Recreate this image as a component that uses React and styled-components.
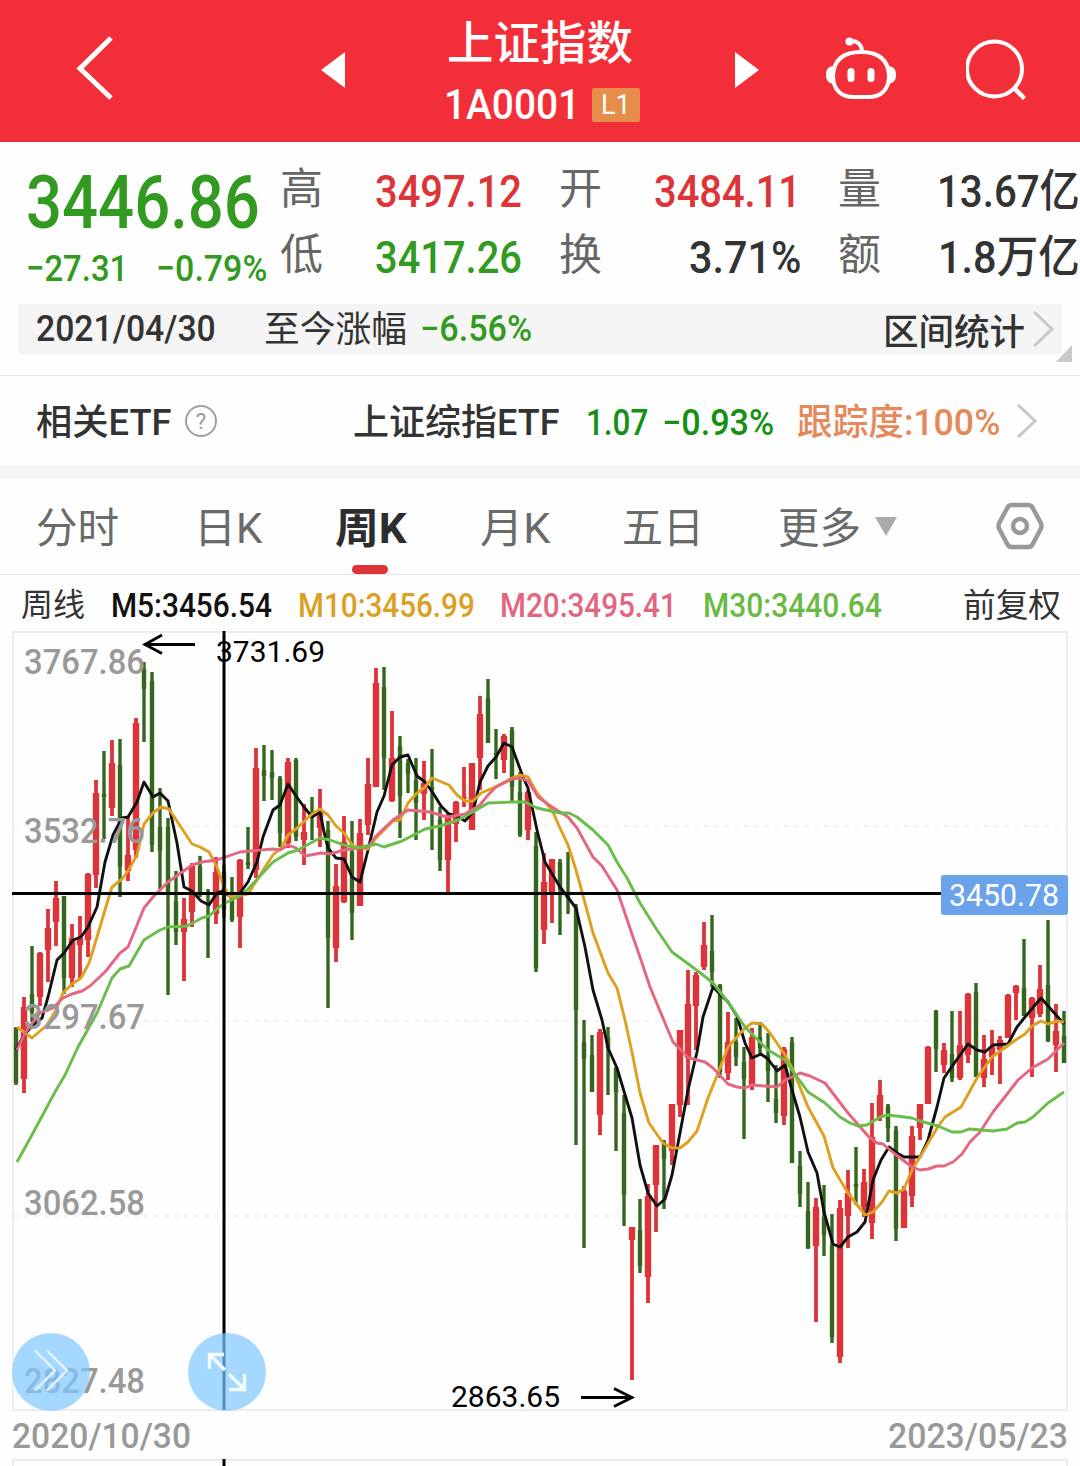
import React, { useLayoutEffect, useRef, useState } from 'react';
import styled, { createGlobalStyle, css } from 'styled-components';

const RED = '#dc3437';
const GREEN = '#329a20';
const CANDLE_GREEN = '#34661c';
const FONT = "Roboto, 'Noto Sans CJK SC', sans-serif";

const GlobalStyle = createGlobalStyle`
  * {
    box-sizing: border-box;
  }
  body {
    margin: 0;
    background: #fefefe;
    font-family: ${FONT};
    color: #333;
  }
  svg {
    display: block;
  }
`;

const Page = styled.div`
  width: 1080px;
  height: 1466px;
  overflow: hidden;
`;

const FitBox = styled.div`
  width: ${props => props.$width}px;
  height: ${props => props.$size}px;
  line-height: ${props => props.$size}px;
  font-size: ${props => props.$size}px;
  font-weight: ${props => props.$weight || 500};
  color: ${props => props.$color || 'inherit'};
  white-space: nowrap;
  flex: none;
  ${props =>
    props.$shift &&
    css`
      margin-top: ${props.$shift}px;
    `};
`;

const FitInner = styled.span`
  display: inline-block;
  transform-origin: 0 50%;
`;

// Squeezes its text into a fixed width, the way a condensed face would look
function Fit({ width, size, weight, color, shift, children }) {
  const inner = useRef(null);
  const [scale, setScale] = useState(1);
  useLayoutEffect(() => {
    setScale(width / inner.current.offsetWidth);
  }, [width, children]);
  return (
    <FitBox $width={width} $size={size} $weight={weight} $color={color} $shift={shift}>
      <FitInner ref={inner} style={{ transform: `scaleX(${scale})` }}>
        {children}
      </FitInner>
    </FitBox>
  );
}

const Header = styled.header`
  display: grid;
  grid-template-columns: 245px 124px 194px 187px 140px 1fr;
  align-items: center;
  height: 142px;
  padding: 0 0 2px 76px;
  background: #f22f38;
  color: #fff;
`;

const BackIcon = styled.svg`
  margin-bottom: 5px;
`;

const RobotIcon = styled.svg`
  margin-bottom: 4px;
`;

const Title = styled.div`
  display: flex;
  flex-direction: column;
  align-items: center;
  gap: 18px;
  padding-top: 6px;
  margin-right: 4px;
`;

const Code = styled.div`
  display: flex;
  align-items: center;
  gap: 12px;
  width: 196px;
  margin-left: 3px;
`;

const Level = styled.div`
  display: flex;
  align-items: center;
  justify-content: center;
  width: 48px;
  height: 34px;
  border-radius: 2px;
  background: #e78d4b;
`;

const NextCell = styled.div`
  padding-left: 96px;
`;

const Quote = styled.section`
  display: grid;
  grid-template-columns: 217px repeat(3, 242px);
  column-gap: 37px;
  height: 162px;
  padding: 16px 0 0 26px;
`;

const Price = styled.div`
  padding-top: 8px;
`;

const Change = styled.div`
  display: flex;
  gap: 28px;
  margin-top: 10px;
`;

const Pair = styled.div`
  display: flex;
  align-items: center;
  justify-content: space-between;
  height: 66px;
`;

const RangeBar = styled.section`
  position: relative;
  display: flex;
  align-items: center;
  width: 1044px;
  height: 50px;
  margin: 0 0 21px 18px;
  padding-left: 18px;
  background: #f5f5f5;
`;

const Spacer = styled.div`
  width: ${props => props.$w}px;
  flex: none;
`;

const Corner = styled.svg`
  position: absolute;
  right: -10px;
  bottom: -8px;
`;

const EtfRow = styled.section`
  display: flex;
  align-items: center;
  height: 103px;
  padding-left: 36px;
  border-top: 1px solid #e4e4e4;
  border-bottom: 12px solid #f5f5f5;
`;

const Help = styled.div`
  display: flex;
  align-items: center;
  justify-content: center;
  width: 32px;
  height: 32px;
  margin-left: 14px;
  border: 2px solid #a0a0a0;
  border-radius: 50%;
  color: #999;
  font-size: 22px;
`;

const Tabs = styled.nav`
  display: grid;
  grid-template-columns: 158px 141px 145px 142px 156px 218px 1fr;
  height: 97px;
  padding-left: 36px;
  border-bottom: 1px solid #e4e4e4;
  color: #6a6a6a;
`;

const Tab = styled.div`
  display: flex;
  flex-direction: column;
  justify-content: space-between;
  padding: 30px 0 1px;
  ${props =>
    props.$active &&
    css`
      color: #2d2d2d;
    `};
`;

const Underline = styled.div`
  width: 36px;
  height: 9px;
  margin-left: 17px;
  border-radius: 5px;
  background: ${RED};
`;

const More = styled.div`
  display: flex;
  align-items: center;
  gap: 14px;
`;

const MoreArrow = styled.svg`
  margin-bottom: 5px;
`;

const Legend = styled.section`
  display: grid;
  grid-template-columns: 90px 187px 202px 203px 260px 1fr;
  align-items: center;
  height: 56px;
  padding: 4px 0 0 21px;
`;

const ChartSvg = styled.svg`
  font-family: ${FONT};
`;

// [type, high, body top, body bottom, low] in chart pixels, one week every 8px
const CANDLES = [
  ['g', 1027, 1028, 1083, 1085], ['r', 997, 1007, 1079, 1093], ['g', 946, 994, 1012, 1022],
  ['r', 952, 953, 997, 1006], ['r', 909, 928, 950, 982], ['r', 881, 898, 922, 946],
  ['g', 896, 896, 978, 994], ['r', 924, 938, 978, 987], ['r', 916, 938, 945, 978],
  ['r', 873, 874, 940, 957], ['r', 780, 793, 875, 888], ['g', 751, 794, 797, 839],
  ['r', 740, 763, 808, 816], ['g', 739, 765, 867, 897], ['r', 817, 855, 871, 881],
  ['r', 718, 723, 850, 858], ['g', 662, 669, 689, 742], ['g', 672, 681, 845, 852],
  ['g', 788, 827, 851, 889], ['g', 818, 827, 893, 995], ['g', 871, 901, 932, 945],
  ['r', 898, 919, 932, 981], ['r', 863, 866, 912, 927], ['g', 856, 866, 895, 897],
  ['g', 889, 902, 903, 958], ['r', 857, 872, 914, 924], ['g', 865, 872, 910, 918],
  ['g', 877, 894, 920, 922], ['r', 859, 860, 917, 948], ['g', 827, 862, 865, 869],
  ['r', 748, 768, 870, 878], ['g', 745, 770, 776, 801], ['g', 750, 772, 778, 800],
  ['g', 776, 778, 833, 847], ['r', 758, 762, 843, 848], ['g', 758, 760, 837, 841],
  ['r', 804, 832, 840, 865], ['g', 797, 812, 813, 840], ['r', 789, 812, 828, 847],
  ['g', 821, 830, 938, 1008], ['r', 864, 886, 948, 962], ['r', 816, 842, 902, 903],
  ['g', 821, 852, 913, 940], ['r', 819, 833, 906, 906], ['r', 758, 784, 825, 835],
  ['r', 668, 683, 787, 787], ['g', 667, 687, 758, 790], ['r', 711, 758, 801, 802],
  ['g', 736, 746, 796, 838], ['g', 759, 763, 774, 793], ['g', 758, 780, 803, 840],
  ['r', 761, 783, 794, 820], ['g', 749, 787, 790, 850], ['g', 807, 820, 860, 871],
  ['r', 813, 815, 860, 892], ['r', 801, 802, 824, 842], ['r', 767, 797, 798, 807],
  ['r', 763, 763, 830, 830], ['r', 696, 714, 758, 790], ['g', 679, 698, 743, 743],
  ['g', 729, 753, 755, 779], ['r', 734, 736, 760, 773], ['g', 727, 730, 787, 801],
  ['g', 772, 792, 835, 837], ['r', 790, 792, 830, 840], ['g', 832, 846, 968, 972],
  ['r', 853, 882, 930, 944], ['r', 859, 859, 893, 923], ['g', 859, 862, 890, 935],
  ['g', 852, 893, 898, 914], ['g', 904, 908, 1010, 1145], ['g', 1020, 1042, 1059, 1248],
  ['g', 1035, 1055, 1092, 1092], ['r', 1029, 1032, 1115, 1135], ['g', 1027, 1037, 1048, 1095],
  ['g', 1067, 1068, 1092, 1151], ['g', 1095, 1113, 1195, 1226], ['r', 1227, 1227, 1240, 1380],
  ['g', 1199, 1230, 1266, 1273], ['r', 1184, 1196, 1277, 1303], ['r', 1145, 1145, 1185, 1232],
  ['g', 1140, 1142, 1159, 1209], ['r', 1104, 1104, 1151, 1165], ['r', 1030, 1030, 1105, 1117],
  ['r', 970, 1004, 1058, 1105], ['r', 972, 975, 1006, 1050], ['r', 922, 945, 967, 970],
  ['g', 915, 951, 972, 987], ['g', 984, 985, 1072, 1078], ['r', 1012, 1042, 1073, 1080],
  ['g', 1018, 1042, 1057, 1066], ['g', 1047, 1062, 1079, 1139], ['r', 1028, 1037, 1085, 1090],
  ['g', 1022, 1037, 1048, 1055], ['g', 1033, 1055, 1071, 1102], ['g', 1065, 1099, 1113, 1123],
  ['r', 1047, 1049, 1116, 1125], ['g', 1037, 1042, 1163, 1163], ['g', 1151, 1166, 1194, 1207],
  ['g', 1182, 1211, 1248, 1249], ['r', 1198, 1207, 1246, 1322], ['g', 1185, 1217, 1235, 1256],
  ['g', 1214, 1245, 1337, 1343], ['r', 1200, 1208, 1357, 1363], ['r', 1170, 1193, 1216, 1248],
  ['g', 1147, 1184, 1187, 1205], ['r', 1169, 1182, 1207, 1217], ['r', 1103, 1137, 1223, 1239],
  ['r', 1080, 1095, 1118, 1121], ['g', 1104, 1106, 1128, 1142], ['g', 1126, 1130, 1229, 1241],
  ['r', 1186, 1191, 1228, 1228], ['r', 1126, 1136, 1196, 1207], ['r', 1104, 1104, 1128, 1140],
  ['r', 1046, 1047, 1104, 1104], ['g', 1010, 1011, 1049, 1072], ['r', 1043, 1050, 1065, 1073],
  ['g', 1011, 1054, 1078, 1082], ['r', 1011, 1045, 1078, 1080], ['r', 993, 994, 1055, 1063],
  ['g', 983, 992, 1077, 1077], ['r', 1035, 1059, 1078, 1087], ['r', 1030, 1047, 1057, 1075],
  ['r', 1036, 1040, 1050, 1084], ['r', 994, 995, 1038, 1038], ['r', 985, 986, 993, 1020],
  ['g', 939, 988, 1016, 1016], ['r', 997, 998, 1018, 1077], ['r', 965, 989, 1014, 1017],
  ['g', 920, 985, 1041, 1042], ['r', 1004, 1031, 1045, 1072], ['g', 1011, 1036, 1063, 1063],
];

const AVERAGES = [
  {
    color: '#111',
    points:
      '16,1050 24,1035 32,1026 42,1018 48,997 57,960 64,953 73,940 81,937 88,927 97,907 105,862 113,835 122,818 128,817 137,802 144,782 153,797 160,793 168,801 177,843 184,887 192,891 201,901 209,905 217,893 223,891 231,897 240,893 248,882 257,862 263,837 273,810 280,805 288,784 296,796 304,807 312,817 320,812 324,832 328,848 336,858 344,859 352,877 360,882 368,850 377,812 384,796 392,765 400,757 408,755 417,776 425,782 433,793 441,806 449,814 457,816 465,821 473,812 480,782 488,766 496,757 504,743 512,747 523,777 528,788 537,830 545,862 560,887 576,908 585,947 593,990 602,1020 608,1048 617,1068 632,1118 640,1165 648,1193 657,1206 665,1199 672,1175 680,1133 688,1090 697,1052 703,1017 713,987 728,1002 737,1016 745,1043 752,1058 761,1054 768,1059 777,1071 785,1065 792,1090 800,1117 808,1152 817,1173 824,1212 833,1244 840,1247 848,1237 857,1232 865,1222 873,1180 881,1160 889,1147 897,1153 904,1157 920,1157 928,1140 937,1107 944,1078 953,1065 968,1044 977,1050 985,1052 993,1045 1008,1044 1017,1027 1025,1017 1041,998 1064,1024',
  },
  {
    color: '#dfa01f',
    points:
      '17,1027 32,1038 47,1025 55,1012 63,993 72,984 81,978 89,963 97,937 105,910 112,887 122,879 128,871 137,855 144,824 153,813 161,807 169,809 192,844 200,847 209,852 217,867 223,885 230,897 248,894 257,880 265,867 273,855 282,847 288,835 296,829 312,814 320,809 328,815 336,826 344,833 353,846 368,849 376,838 393,821 400,820 408,803 417,793 425,787 432,778 449,785 457,795 465,801 473,801 481,793 495,787 512,778 520,775 528,777 537,793 552,810 560,828 568,845 576,870 585,903 593,933 608,973 617,988 625,1020 633,1057 640,1093 649,1123 663,1143 672,1148 680,1148 688,1142 697,1131 708,1098 720,1068 728,1047 745,1028 752,1023 762,1024 770,1033 785,1055 793,1070 808,1107 824,1136 833,1168 848,1193 865,1215 873,1212 882,1202 889,1191 897,1193 904,1189 912,1170 920,1157 937,1128 945,1117 953,1112 961,1107 977,1078 992,1057 1017,1039 1025,1034 1032,1026 1041,1021 1048,1024 1057,1021 1064,1022',
  },
  {
    color: '#e4677f',
    points:
      '17,1050 25,1033 40,1013 53,1008 63,998 72,994 82,991 90,986 105,972 120,953 128,947 144,908 153,897 168,882 192,865 202,862 217,860 240,852 250,851 273,849 280,850 288,845 296,848 305,856 321,853 330,854 344,850 368,847 376,836 393,820 408,810 430,812 447,817 465,814 480,805 488,795 496,787 512,779 520,778 528,781 538,797 552,807 568,817 577,828 593,857 602,866 617,890 633,937 642,963 650,987 665,1023 673,1042 689,1058 705,1062 713,1068 728,1084 737,1087 745,1088 752,1085 777,1087 785,1080 792,1077 800,1073 810,1076 825,1083 848,1113 868,1136 877,1143 883,1144 895,1154 912,1167 920,1170 928,1169 937,1166 944,1166 953,1162 962,1154 970,1142 980,1132 993,1112 1008,1093 1018,1080 1032,1068 1048,1059 1064,1043',
  },
  {
    color: '#69bd4b',
    points:
      '17,1162 33,1133 55,1092 65,1075 78,1047 97,1013 112,978 120,969 129,966 144,940 160,930 168,927 187,926 202,918 209,916 223,904 240,896 248,889 273,862 288,853 298,850 320,838 330,840 344,845 357,848 376,844 384,847 402,841 425,829 440,826 458,820 473,812 488,803 512,802 525,802 537,808 560,813 569,813 577,817 593,830 608,845 617,862 627,878 640,903 657,930 672,952 687,963 703,975 713,983 728,1002 745,1027 768,1050 785,1060 792,1070 808,1092 825,1103 840,1117 850,1123 858,1126 867,1125 880,1117 888,1115 912,1118 920,1121 938,1126 952,1132 961,1132 969,1129 993,1131 1007,1129 1017,1123 1025,1122 1033,1117 1048,1103 1064,1092',
  },
];

const AXIS = [
  ['3767.86', 662],
  ['3532.76', 831],
  ['3297.67', 1017],
  ['3062.58', 1203],
  ['2827.48', 1381],
];

function Label({ x, y, width, size, weight = 400, fill = '#000', children }) {
  return (
    <text
      x={x}
      y={y + size * 0.355}
      fontSize={size}
      fontWeight={weight}
      fill={fill}
      textLength={width}
      lengthAdjust="spacingAndGlyphs"
    >
      {children}
    </text>
  );
}

function Candle({ x, candle }) {
  const [type, high, top, bottom, low] = candle;
  const up = type === 'r';
  const bodyWidth = up ? 6.4 : 4.4;
  const wickWidth = up ? 3.8 : 3.4;
  return (
    <g fill={up ? RED : CANDLE_GREEN}>
      <rect x={x - wickWidth / 2} y={high} width={wickWidth} height={low - high} />
      <rect x={x - bodyWidth / 2} y={top} width={bodyWidth} height={bottom - top} />
    </g>
  );
}

function Chart() {
  return (
    <ChartSvg width="1080" height="835" viewBox="0 631 1080 835">
      <rect x="13" y="632" width="1054" height="778" fill="none" stroke="#ededee" strokeWidth="2" />
      <path d="M13 1466V1460H1067V1466" fill="none" stroke="#ededee" strokeWidth="2" />
      <path d="M14 826H1066M14 1021H1066M14 1216H1066" stroke="#efeff2" strokeWidth="1.5" strokeDasharray="5 5" />
      {CANDLES.map((candle, i) => (
        <Candle key={i} x={16 + i * 8} candle={candle} />
      ))}
      {AVERAGES.map(line => (
        <polyline
          key={line.color}
          points={line.points}
          fill="none"
          stroke={line.color}
          strokeWidth="2.9"
          strokeLinejoin="round"
        />
      ))}
      {AXIS.map(([value, y]) => (
        <Label key={value} x={24} y={y} width={121} size={35} weight={500} fill="#999">
          {value}
        </Label>
      ))}
      <path d="M12 893.5H942M224 631V1410M224 1459V1466" stroke="#000" strokeWidth="3" />
      <Label x={216} y={651.5} width={109} size={30}>
        3731.69
      </Label>
      <Label x={451} y={1396.5} width={109} size={30}>
        2863.65
      </Label>
      <path
        d="M195 644.5H145M162 635L145 644.5L162 653.5M581 1397.5H632M614 1388.5L632 1397.5L614 1406.5"
        fill="none"
        stroke="#000"
        strokeWidth="2.8"
      />
      <rect x="941" y="875" width="127" height="40" rx="3" fill="#6ba3ea" />
      <Label x={949} y={894.5} width={110} size={31} fill="#fff">
        3450.78
      </Label>
      <g fill="#7ec8ff" fillOpacity="0.7">
        <circle cx="51" cy="1372" r="39" />
        <circle cx="227" cy="1372" r="39" />
      </g>
      <path
        d="M35 1350.5L55 1370.5L35 1390.5M47 1350.5L67 1370.5L47 1390.5"
        fill="none"
        stroke="#e6f5ff"
        strokeWidth="2.2"
      />
      <path
        d="M225 1370L210 1355M209.500 1369V1354.500H224M229 1374L244 1389M229 1389.500H244.500V1374"
        fill="none"
        stroke="#f4fbff"
        strokeWidth="3.4"
      />
      <Label x={12} y={1436} width={179} size={35} weight={500} fill="#999">
        2020/10/30
      </Label>
      <Label x={888} y={1436} width={180} size={35} weight={500} fill="#999">
        2023/05/23
      </Label>
    </ChartSvg>
  );
}

function Chevron({ width, height }) {
  return (
    <svg width={width} height={height} fill="none" stroke="#c8c8c8" strokeWidth="3">
      <path d={`M2 1L${width - 2} ${height / 2}L2 ${height - 1}`} />
    </svg>
  );
}

function Stat({ label, value, width, color }) {
  return (
    <Pair>
      <Fit width={43} size={43} weight={400} color="#666" shift={-3}>
        {label}
      </Fit>
      <Fit width={width} size={45} color={color}>
        {value}
      </Fit>
    </Pair>
  );
}

export default function App() {
  return (
    <Page>
      <GlobalStyle />
      <Header>
        <BackIcon width="38" height="66" viewBox="0 0 38 66" fill="none" stroke="#fff" strokeWidth="5">
          <path d="M35 3L4 33.500L35 63" />
        </BackIcon>
        <svg width="24" height="36" fill="#fff">
          <path d="M24 0V36L0 18Z" />
        </svg>
        <Title>
          <Fit width={186} size={46}>
            上证指数
          </Fit>
          <Code>
            <Fit width={136} size={42}>
              1A0001
            </Fit>
            <Level>
              <Fit width={30} size={28} weight={400}>
                L1
              </Fit>
            </Level>
          </Code>
        </Title>
        <NextCell>
          <svg width="24" height="36" fill="#fff">
            <path d="M0 0V36L24 18Z" />
          </svg>
        </NextCell>
        <RobotIcon width="70" height="66" viewBox="0 0 70 66" fill="none" stroke="#fff" strokeWidth="4">
          <path d="M35 17C53 17 62 25 63 40C63 56 54 62 42 62H28C16 62 7 56 7 40C8 25 17 17 35 17Z" />
          <path d="M36 17C36 10 32 6 25 6" />
          <circle cx="23.500" cy="6.500" r="4" fill="#fff" stroke="none" />
          <path d="M7 31C1 32 0 36 0 40C0 45 2 48 8 49ZM63 31C69 32 70 36 70 40C70 45 68 48 62 49Z" fill="#fff" stroke="none" />
          <path d="M25 36.500V43.500M45 36.500V43.500" strokeWidth="7" strokeLinecap="round" />
        </RobotIcon>
        <svg width="64" height="62" viewBox="0 0 64 62" fill="none" stroke="#fff" strokeWidth="4">
          <circle cx="28.500" cy="30" r="27.500" />
          <path d="M48 49L58.500 59.500" strokeWidth="4.500" />
        </svg>
      </Header>

      <Quote>
        <Price>
          <Fit width={234} size={74} color={GREEN}>
            3446.86
          </Fit>
          <Change>
            <Fit width={102} size={37} color={GREEN}>
              −27.31
            </Fit>
            <Fit width={111} size={37} color={GREEN}>
              −0.79%
            </Fit>
          </Change>
        </Price>
        <div>
          <Stat label="高" value="3497.12" width={147} color={RED} />
          <Stat label="低" value="3417.26" width={147} color={GREEN} />
        </div>
        <div>
          <Stat label="开" value="3484.11" width={147} color={RED} />
          <Stat label="换" value="3.71%" width={112} />
        </div>
        <div>
          <Stat label="量" value="13.67亿" width={143} />
          <Stat label="额" value="1.8万亿" width={142} />
        </div>
      </Quote>

      <RangeBar>
        <Fit width={180} size={36}>
          2021/04/30
        </Fit>
        <Spacer $w={48} />
        <Fit width={143} size={36} weight={400} shift={2}>
          至今涨幅
        </Fit>
        <Spacer $w={13} />
        <Fit width={112} size={36} color={GREEN}>
          −6.56%
        </Fit>
        <Spacer $w={351} />
        <Fit width={142} size={36} shift={7}>
          区间统计
        </Fit>
        <Spacer $w={7} />
        <Chevron width={22} height={36} />
        <Corner width="16" height="17" fill="#c9c9c9">
          <path d="M16 0V17H0Z" />
        </Corner>
      </RangeBar>

      <EtfRow>
        <Fit width={135} size={36} shift={4}>
          相关ETF
        </Fit>
        <Help>?</Help>
        <Spacer $w={136} />
        <Fit width={206} size={36} shift={4}>
          上证综指ETF
        </Fit>
        <Spacer $w={27} />
        <Fit width={62} size={36} color="#149014" shift={4}>
          1.07
        </Fit>
        <Spacer $w={14} />
        <Fit width={112} size={36} color="#149014" shift={4}>
          −0.93%
        </Fit>
        <Spacer $w={23} />
        <Fit width={203} size={36} color="#e6895a" shift={4}>
          跟踪度:100%
        </Fit>
        <Spacer $w={16} />
        <Chevron width={21} height={34} />
      </EtfRow>

      <Tabs>
        <Tab>
          <Fit width={83} size={42} weight={400}>
            分时
          </Fit>
        </Tab>
        <Tab>
          <Fit width={68} size={42} weight={400}>
            日K
          </Fit>
        </Tab>
        <Tab $active>
          <Fit width={72} size={42} weight={700}>
            周K
          </Fit>
          <Underline />
        </Tab>
        <Tab>
          <Fit width={70} size={42} weight={400}>
            月K
          </Fit>
        </Tab>
        <Tab>
          <Fit width={82} size={42} weight={400}>
            五日
          </Fit>
        </Tab>
        <Tab>
          <More>
            <Fit width={83} size={42} weight={400}>
              更多
            </Fit>
            <MoreArrow width="22" height="19" fill="#aaa">
              <path d="M0 0H22L11 19Z" />
            </MoreArrow>
          </More>
        </Tab>
        <svg width="48" height="97" viewBox="0 0 48 97" fill="none" stroke="#999" strokeWidth="4.500">
          <path d="M15.500 27H32.500Q35 27 36.500 29.500L45 45.500Q46 48 45 50.500L36.500 66.500Q35 69 32.500 69H15.500Q13 69 11.500 66.500L3 50.500Q2 48 3 45.500L11.500 29.500Q13 27 15.500 27Z" />
          <circle cx="24" cy="48" r="7" />
        </svg>
      </Tabs>

      <Legend>
        <Fit width={64} size={32} weight={400}>
          周线
        </Fit>
        <Fit width={161} size={33} color="#111">
          M5:3456.54
        </Fit>
        <Fit width={177} size={33} color="#dba022">
          M10:3456.99
        </Fit>
        <Fit width={177} size={33} color="#e2667f">
          M20:3495.41
        </Fit>
        <Fit width={179} size={33} color="#69b945">
          M30:3440.64
        </Fit>
        <Fit width={98} size={33} weight={400}>
          前复权
        </Fit>
      </Legend>
      <Chart />
    </Page>
  );
}
